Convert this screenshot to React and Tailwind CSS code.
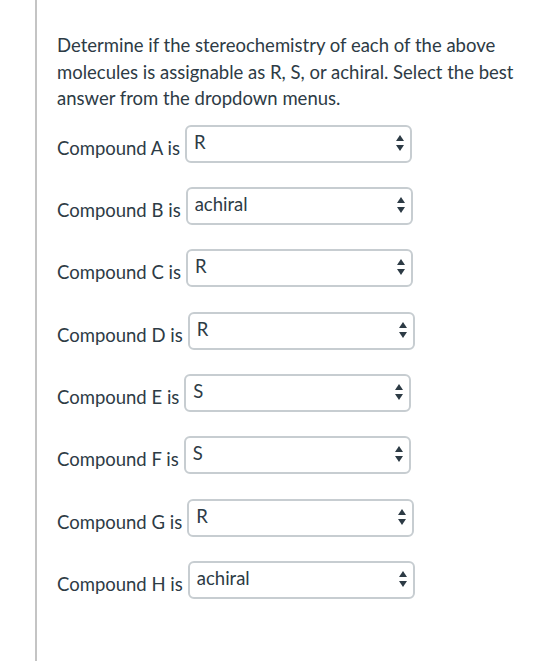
const ROWS = [
  ['A', 'R'],
  ['B', 'achiral'],
  ['C', 'R'],
  ['D', 'R'],
  ['E', 'S'],
  ['F', 'S'],
  ['G', 'R'],
  ['H', 'achiral'],
]

function SelectArrows() {
  return (
    <svg width="8" height="18" viewBox="0 0 8 18" className="shrink-0">
      <path d="M4 1 L8 7 L0 7 Z" fill="#2d3b45" />
      <path d="M0 11 L8 11 L4 17 Z" fill="#2d3b45" />
    </svg>
  )
}

function Select({ value }) {
  return (
    <div className="w-[227px] h-[38px] border-2 border-[#c7cdd1] rounded-[6px] bg-white flex items-start justify-between pl-[7px] pr-[6px]">
      <span className="leading-[26px] mt-[2px]">{value}</span>
      <div className="mt-[7px]">
        <SelectArrows />
      </div>
    </div>
  )
}

export default function App() {
  return (
    <div className="w-[560px] h-[661px] bg-white flex text-[#2d3b45] text-[18.5px]" style={{ fontFamily: 'Lato, "Open Sans", sans-serif' }}>
      <div className="w-[35px] shrink-0" />
      <div className="w-[2px] h-full bg-[#c4c4c4] shrink-0" />
      <div className="pl-[20px] pt-[32px] w-[500px]">
        <p className="leading-[26.5px] w-[470px]">
          Determine if the stereochemistry of each of the above molecules is assignable as R, S, or achiral. Select the best answer from the dropdown menus.
        </p>
        <div className="mt-[13px] flex flex-col gap-[24.4px]">
          {ROWS.map(([letter, value]) => (
            <div key={letter} className="flex items-start gap-[5px]">
              <span className="leading-[26px] mt-[10px]">Compound {letter} is</span>
              <Select value={value} />
            </div>
          ))}
        </div>
      </div>
    </div>
  )
}
